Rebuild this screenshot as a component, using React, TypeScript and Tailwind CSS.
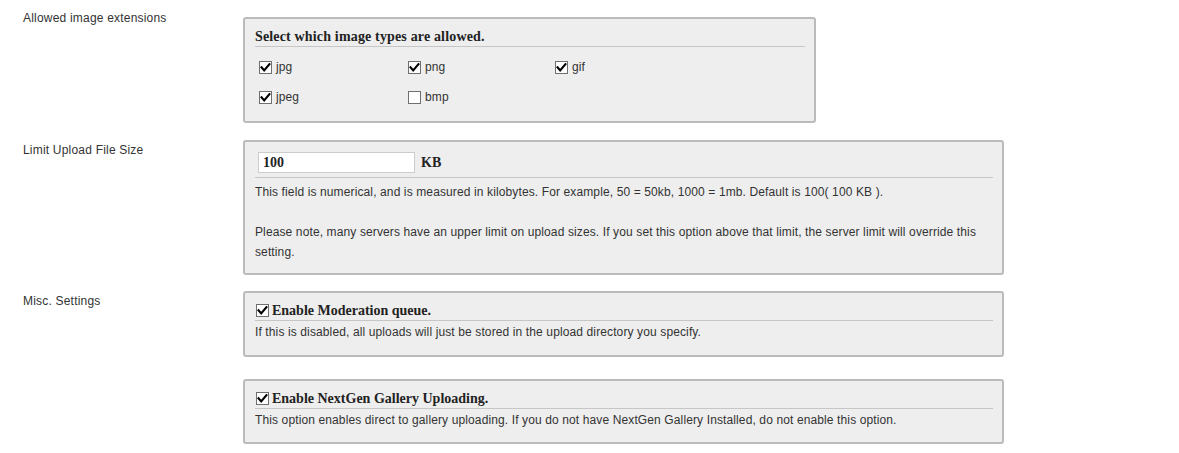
import React from "react";

function Check({ checked }: { checked: boolean }) {
  return (
    <svg width="13" height="13" viewBox="0 0 13 13" className="shrink-0 block">
      <rect x="0.5" y="0.5" width="12" height="12" fill="#ffffff" stroke="#6f6f6f" />
      {checked && (
        <path d="M2.6 6.4 L5.2 9.4 L10.4 3.2" stroke="#000000" strokeWidth="2.2" fill="none" strokeLinecap="square" />
      )}
    </svg>
  );
}

const heading =
  "font-['Liberation_Serif','Times_New_Roman',serif] font-bold text-[14px] leading-[17px] text-[#222222]";

function Box({ wide, children, className = "" }: { wide: boolean; children: React.ReactNode; className?: string }) {
  return (
    <div
      className={`${wide ? "w-[761px]" : "w-[573px]"} border-2 border-[#bbbbbb] rounded-[3px] bg-[#eeeeee] pl-[10px] pr-[9px] ${className}`}
    >
      {children}
    </div>
  );
}

function Ext({ label, checked, w }: { label: string; checked: boolean; w: string }) {
  return (
    <div className={`${w} h-[30px] flex items-center gap-[4px] pl-[4px]`}>
      <Check checked={checked} />
      <span>{label}</span>
    </div>
  );
}

export default function App() {
  return (
    <div className="w-[1179px] h-[453px] bg-white pt-[17px] font-['Liberation_Sans',Arial,sans-serif] text-[12px] leading-[20px] tracking-[0.12px] text-[#333333] overflow-hidden">
      {/* Row 1 */}
      <div className="flex items-start">
        <div className="w-[243px] shrink-0 pl-[23px] mt-[-9px] tracking-[0.2px]">Allowed image extensions</div>
        <Box wide={false} className="pt-[9px] pb-[9px]">
          <div className={`${heading} tracking-[0.16px] border-b border-[#c6c6c6] pb-[1px]`}>
            Select which image types are allowed.
          </div>
          <div className="mt-[5px]">
            <div className="flex">
              <Ext label="jpg" checked w="w-[149px]" />
              <Ext label="png" checked w="w-[147px]" />
              <Ext label="gif" checked w="w-[147px]" />
            </div>
            <div className="flex">
              <Ext label="jpeg" checked w="w-[149px]" />
              <Ext label="bmp" checked={false} w="w-[147px]" />
            </div>
          </div>
        </Box>
      </div>

      {/* Row 2 */}
      <div className="flex items-start mt-[17px]">
        <div className="w-[243px] shrink-0 pl-[23px] mt-[0px] tracking-[0.2px]">Limit Upload File Size</div>
        <Box wide className="pt-[10px] pb-[11px]">
          <div className="flex items-center border-b border-[#c6c6c6] pb-[4px]">
            <div
              className={`ml-[3px] w-[157px] h-[21px] bg-white border border-[#cccccc] pl-[4px] flex items-center ${heading} tracking-normal`}
            >
              100
            </div>
            <span className={`ml-[6px] ${heading} tracking-normal`}>KB</span>
          </div>
          <div className="mt-[4px]">
            <div>
              This field is numerical, and is measured in kilobytes. For example, 50 = 50kb, 1000 = 1mb. Default is
              100( 100 KB ).
            </div>
            <div className="h-[20px]" />
            <div>
              Please note, many servers have an upper limit on upload sizes. If you set this option above that limit,
              the server limit will override this setting.
            </div>
          </div>
        </Box>
      </div>

      {/* Row 3 */}
      <div className="flex items-start mt-[16px]">
        <div className="w-[243px] shrink-0 pl-[23px] mt-[0px] tracking-[0.2px]">Misc. Settings</div>
        <Box wide className="pt-[9px] pb-[13px]">
          <div className={`${heading} tracking-normal flex items-center gap-[3px] border-b border-[#c6c6c6] pb-[1px]`}>
            <span className="ml-[1px]">
              <Check checked />
            </span>
            <span>Enable Moderation queue.</span>
          </div>
          <div className="mt-[1px]">If this is disabled, all uploads will just be stored in the upload directory you specify.</div>
        </Box>
      </div>

      {/* Row 4 */}
      <div className="flex items-start mt-[22px]">
        <div className="w-[243px] shrink-0" />
        <Box wide className="pt-[9px] pb-[12px]">
          <div className={`${heading} tracking-normal flex items-center gap-[3px] border-b border-[#c6c6c6] pb-[1px]`}>
            <span className="ml-[1px]">
              <Check checked />
            </span>
            <span>Enable NextGen Gallery Uploading.</span>
          </div>
          <div className="mt-[1px]">
            This option enables direct to gallery uploading. If you do not have NextGen Gallery Installed, do not enable
            this option.
          </div>
        </Box>
      </div>
    </div>
  );
}
